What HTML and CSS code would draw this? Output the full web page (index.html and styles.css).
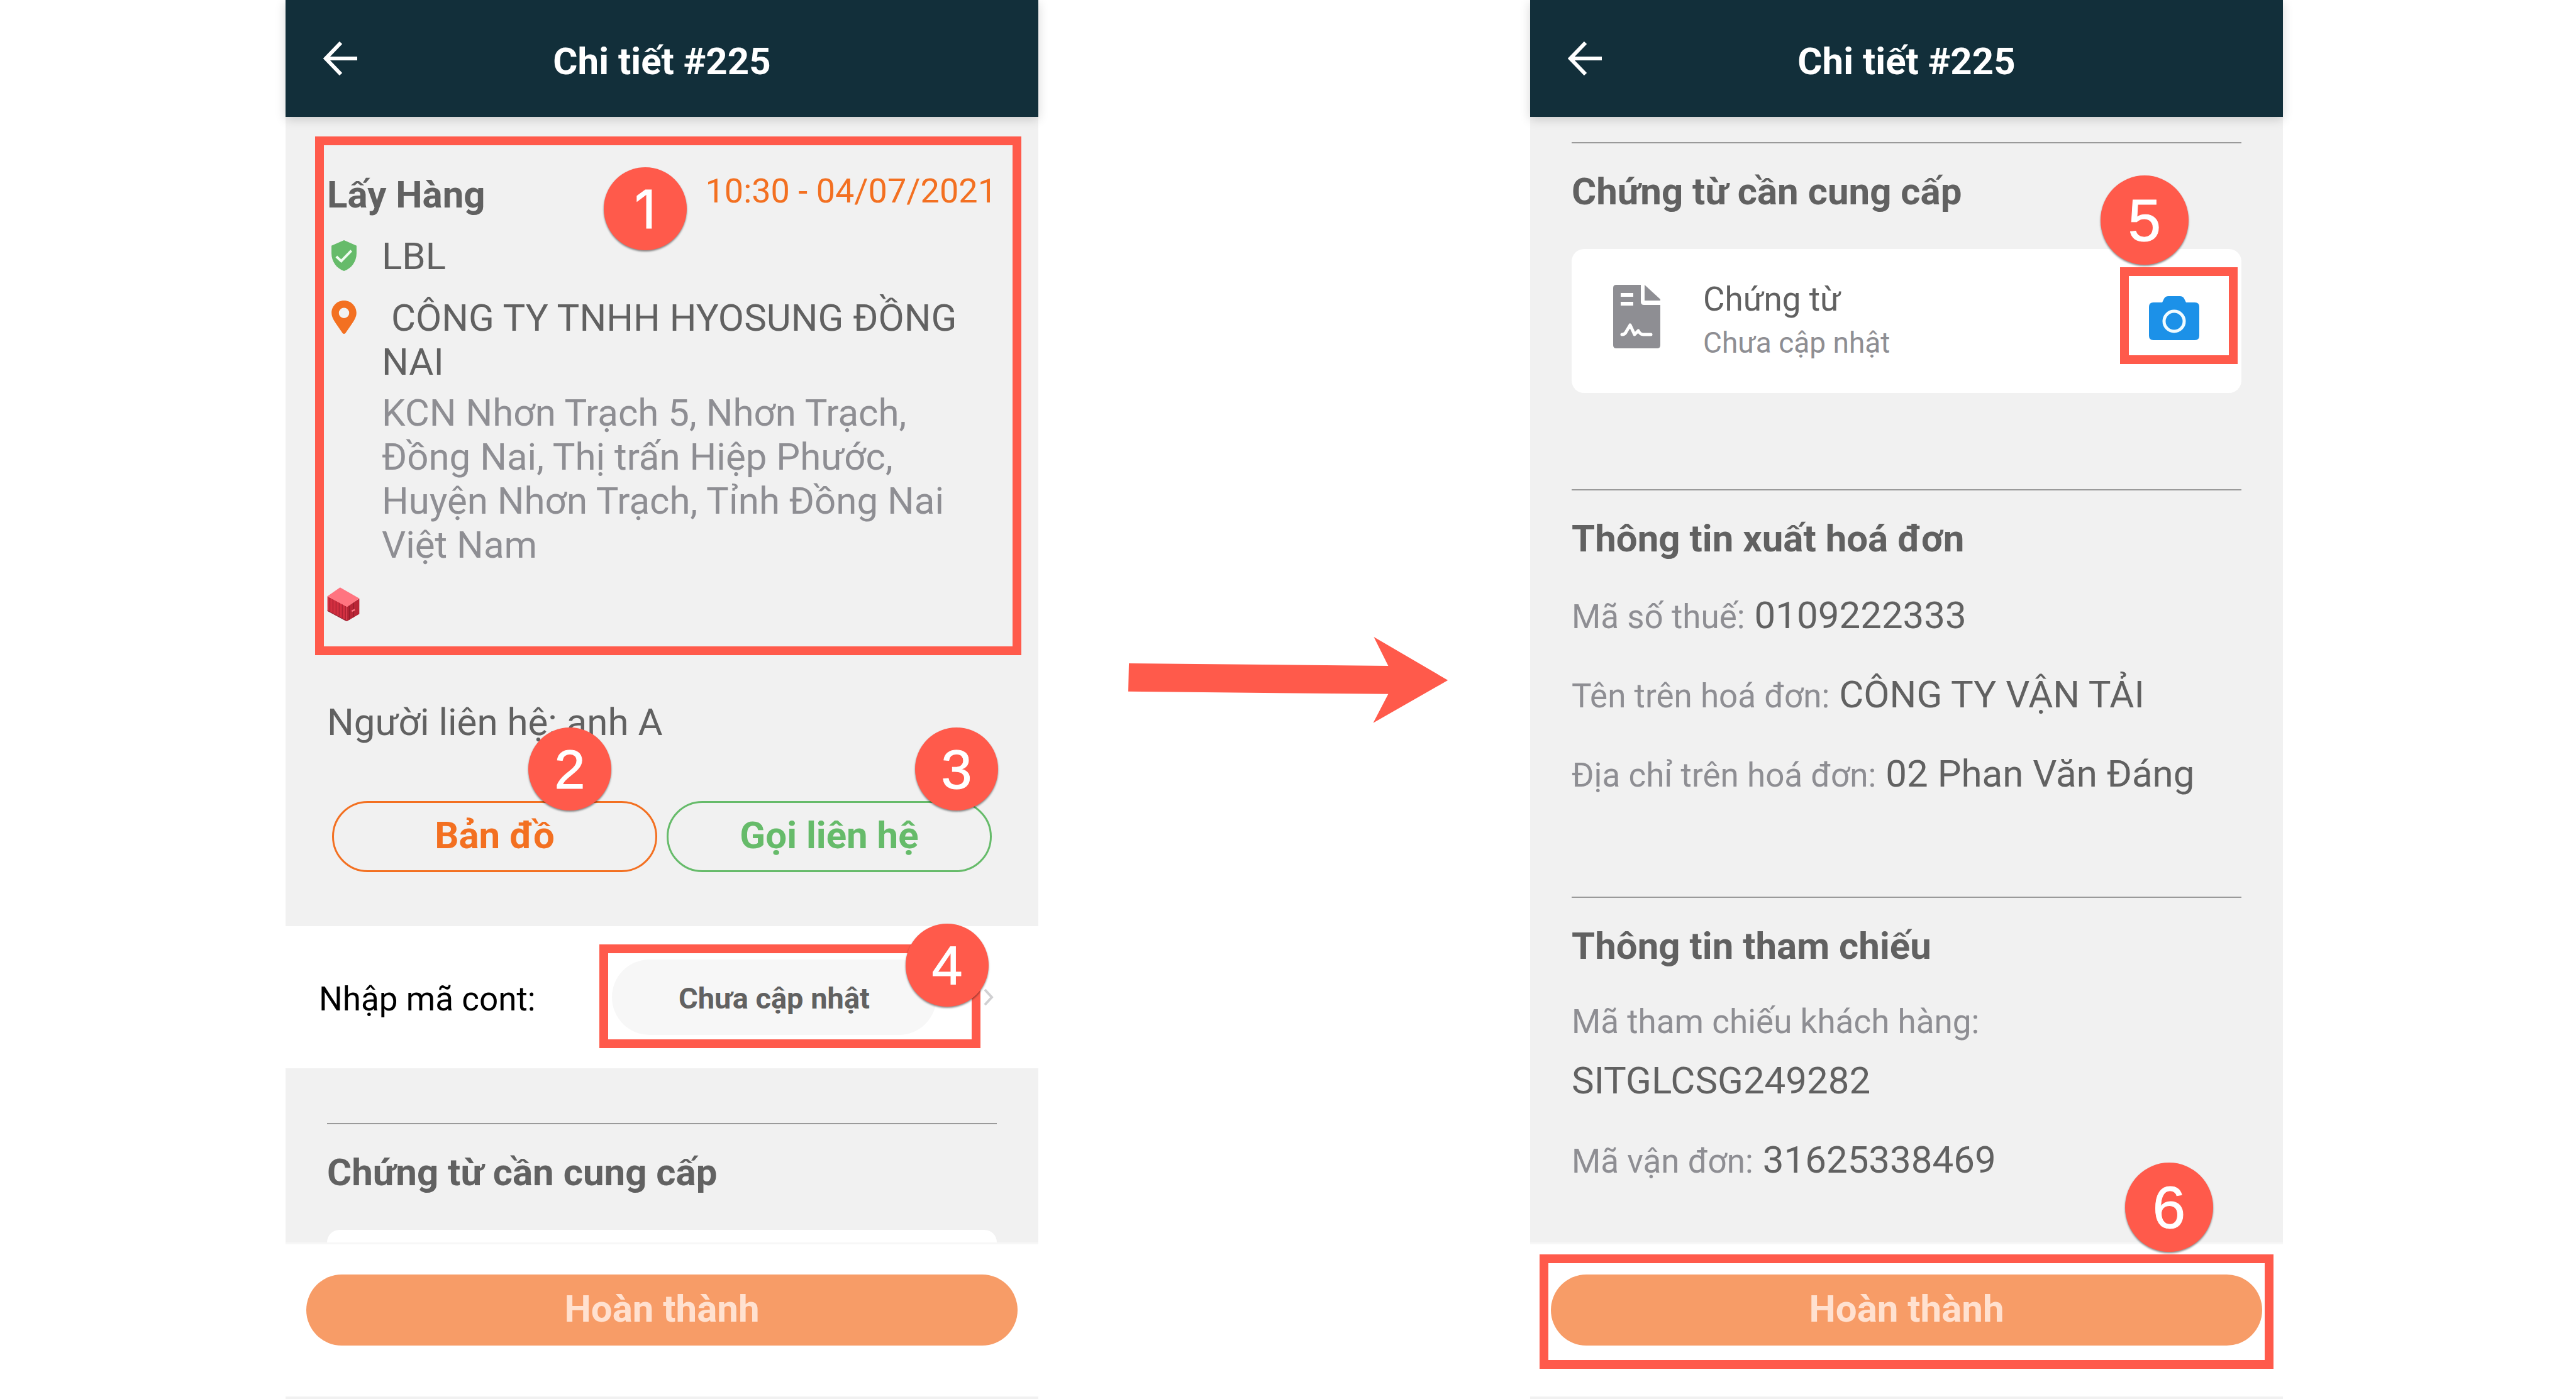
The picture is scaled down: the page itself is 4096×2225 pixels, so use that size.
FILE: index.html
```html
<!DOCTYPE html>
<html lang="vi">
<head>
<meta charset="utf-8">
<meta name="viewport" content="width=device-width, initial-scale=1">
<title>Chi tiết #225</title>
<link rel="stylesheet" href="styles.css">
</head>
<body>
<main class="guide">
  <section class="phone phone-first">
    <header class="topbar">
      <button class="back" type="button" aria-label="Quay lại">
        <svg viewBox="0 0 54 54" aria-hidden="true"><path d="M54 27H5M28 2 4 27l24 25" fill="none" stroke="#fff" stroke-width="6"/></svg>
      </button>
      <h1 class="topbar-title">Chi tiết #225</h1>
    </header>
    <div class="content">
      <section class="stop">
        <div class="stop-info">
          <div class="stop-head">
            <h2 class="heading">Lấy Hàng</h2>
            <time class="stop-time">10:30 - 04/07/2021</time>
          </div>
          <div class="stop-row">
            <span class="stop-icon"><svg class="icon-shield" viewBox="102 55 144 177" aria-hidden="true"><path d="M174 55l72 32v44c0 46-30 88-72 101-42-13-72-55-72-101V87z" fill="#66bb6a"/><path d="M130 149l28 26 58-60" fill="none" stroke="#effcf0" stroke-width="14"/></svg></span>
            <p class="value">LBL</p>
          </div>
          <div class="stop-row">
            <span class="stop-icon"><svg class="icon-pin" viewBox="102 401 144 193" aria-hidden="true"><path fill-rule="evenodd" d="M174 401c-40 0-72 32-72 72 0 22 12 42 25 61l39 56q8 8 16 0l39-56c13-19 25-39 25-61 0-40-32-72-72-72zm0 42a30 30 0 1 1 0 60 30 30 0 0 1 0-60z" fill="#f37021"/></svg></span>
            <div class="stop-place">
              <p class="value">&nbsp;CÔNG TY TNHH HYOSUNG ĐỒNG NAI</p>
              <p class="address">KCN Nhơn Trạch 5, Nhơn Trạch, Đồng Nai, Thị trấn Hiệp Phước, Huyện Nhơn Trạch, Tỉnh Đồng Nai Việt Nam</p>
            </div>
          </div>
          <svg class="icon-container" viewBox="80 68 188 196" aria-hidden="true">
            <path d="M82 120l113 60v84L82 203z" fill="#d32f40"/>
            <path d="M195 180l71-47v89l-71 42z" fill="#b92536"/>
            <path d="M155 69l111 63-71 49-113-61z" fill="#ff7480"/>
            <path d="M96 130v80M114 139v80M132 149v80M150 158v80M168 168v80M186 177v80" stroke="#ad2334" stroke-width="5"/>
            <path d="M82 203l113 61" stroke="#8d2030" stroke-width="4"/>
            <path d="M232 158v84M208 174v82" stroke="#921d2b" stroke-width="5"/>
            <path d="M222 206l18-9" stroke="#ff7480" stroke-width="9"/>
          </svg>
          <span class="mark mark-stop"></span>
          <span class="badge badge-1">1</span>
        </div>
        <p class="value contact">Người liên hệ: anh A</p>
        <div class="actions">
          <div class="action">
            <button class="outline outline-orange" type="button">Bản đồ</button>
            <span class="badge badge-2">2</span>
          </div>
          <div class="action">
            <button class="outline outline-green" type="button">Gọi liên hệ</button>
            <span class="badge badge-3">3</span>
          </div>
        </div>
      </section>
      <section class="cont-row">
        <label class="cont-label" for="cont-code">Nhập mã cont:</label>
        <div class="cont-field">
          <button class="pill" id="cont-code" type="button">Chưa cập nhật</button>
          <span class="mark mark-cont"></span>
          <span class="badge badge-4">4</span>
        </div>
        <svg class="chevron" viewBox="0 0 16 28" aria-hidden="true"><path d="M2 2l11 12L2 26" fill="none" stroke="#d0d0d2" stroke-width="4"/></svg>
      </section>
      <section class="block">
        <h2 class="heading">Chứng từ cần cung cấp</h2>
        <div class="card"></div>
      </section>
    </div>
    <footer class="bottom">
      <div class="finish"><button class="primary" type="button">Hoàn thành</button></div>
    </footer>
  </section>

  <svg class="arrow" viewBox="0 0 509 137" role="img" aria-label="Tiếp theo"><path d="M1 42l413 4-23-46 118 69-119 68 24-46L0 87z" fill="#ff5a4b"/></svg>

  <section class="phone phone-second">
    <header class="topbar">
      <button class="back" type="button" aria-label="Quay lại">
        <svg viewBox="0 0 54 54" aria-hidden="true"><path d="M54 27H5M28 2 4 27l24 25" fill="none" stroke="#fff" stroke-width="6"/></svg>
      </button>
      <h1 class="topbar-title">Chi tiết #225</h1>
    </header>
    <div class="content content-scrolled">
      <section class="block">
        <h2 class="heading">Chứng từ cần cung cấp</h2>
        <div class="card">
          <svg class="icon-doc" viewBox="0 0 75 101" aria-hidden="true">
            <path d="M5 0h39v27q0 5 5 5h26v64q0 5-5 5H5q-5 0-5-5V5q0-5 5-5z" fill="#8e8e93"/>
            <path d="M50 0l25 23v2H50z" fill="#8e8e93"/>
            <path d="M12 16h20M12 30h20" stroke="#fff" stroke-width="6"/>
            <path d="M14 79q5 0 7-5l6-10 7 15 6-6q3 6 8 6h12" fill="none" stroke="#fff" stroke-width="5" stroke-linecap="round" stroke-linejoin="round"/>
          </svg>
          <div class="card-text">
            <p class="card-title">Chứng từ</p>
            <p class="card-note">Chưa cập nhật</p>
          </div>
          <div class="camera-wrap">
            <button class="camera" type="button" aria-label="Chụp ảnh">
              <svg viewBox="0 0 80 70" aria-hidden="true"><path d="M21 10l3-6q2-4 7-4h18q5 0 7 4l3 6h14q7 0 7 7v46q0 7-7 7H7q-7 0-7-7V17q0-7 7-7z" fill="#1c91e8"/><circle cx="40" cy="40" r="16" fill="none" stroke="#f0fbff" stroke-width="5"/></svg>
            </button>
            <span class="mark mark-camera"></span>
            <span class="badge badge-large badge-5">5</span>
          </div>
        </div>
      </section>
      <section class="block block-invoice">
        <h2 class="heading">Thông tin xuất hoá đơn</h2>
        <div class="facts">
          <p class="value"><span class="label">Mã số thuế:</span> 0109222333</p>
          <p class="value"><span class="label">Tên trên hoá đơn:</span> CÔNG TY VẬN TẢI</p>
          <p class="value"><span class="label">Địa chỉ trên hoá đơn:</span> 02 Phan Văn Đáng</p>
        </div>
      </section>
      <section class="block block-reference">
        <h2 class="heading">Thông tin tham chiếu</h2>
        <div class="facts">
          <div class="fact-stacked">
            <p class="label label-line">Mã tham chiếu khách hàng:</p>
            <p class="value">SITGLCSG249282</p>
          </div>
          <p class="value"><span class="label">Mã vận đơn:</span> 31625338469</p>
        </div>
      </section>
    </div>
    <footer class="bottom">
      <div class="finish">
        <button class="primary" type="button">Hoàn thành</button>
        <span class="mark mark-finish"></span>
        <span class="badge badge-large badge-6">6</span>
      </div>
    </footer>
  </section>
</main>
</body>
</html>
```
FILE: styles.css
```css
* {
  box-sizing: border-box;
}

body,
h1,
h2,
p {
  margin: 0;
}

body {
  background: #fff;
  color: #616161;
  font-family: Roboto, "Noto Sans", sans-serif;
  font-size: 60px;
  line-height: 70px;
}

button {
  margin: 0;
  padding: 0;
  border: 0;
  background: none;
  color: inherit;
  font: inherit;
  cursor: pointer;
}

svg {
  display: block;
}

.guide {
  display: grid;
  grid-template-columns: 454fr 1197fr 782fr 1197fr 466fr;
  height: 100vh;
}

.phone {
  display: flex;
  flex-direction: column;
  min-width: 0;
  height: 100vh;
  background: #f1f1f1;
}

.phone-first {
  grid-column: 2;
}

.phone-second {
  grid-column: 4;
}

.arrow {
  grid-column: 3;
  align-self: start;
  justify-self: center;
  width: 65%;
  margin-top: 1013px;
  margin-left: 12px;
}

/* Top bar */
.topbar {
  position: relative;
  z-index: 1;
  display: grid;
  grid-template-columns: 54px 1fr 54px;
  align-items: center;
  flex: none;
  height: 186px;
  padding: 0 60px;
  background: #122f3a;
  box-shadow: 0 4px 16px rgba(0, 0, 0, 0.16);
  color: #fff;
}

.back svg {
  width: 54px;
  height: 54px;
}

.topbar-title {
  padding-top: 10px;
  font-size: 60px;
  font-weight: 700;
  text-align: center;
}

/* Scrolling area */
.content {
  flex: 1;
  min-height: 0;
  overflow: hidden;
}

.content-scrolled {
  padding-top: 40px;
}

.heading {
  font-size: 60px;
  font-weight: 700;
}

.label {
  color: #8e8e93;
  font-size: 53px;
  line-height: 60px;
}

.label-line {
  line-height: 66px;
}

.stop {
  padding: 89px 66px 86px;
}

.stop-info {
  position: relative;
}

.stop-head {
  display: flex;
  justify-content: space-between;
  align-items: flex-start;
}

.stop-time {
  color: #f37021;
  font-size: 54px;
  line-height: 58px;
}

.stop-row {
  display: flex;
  margin-top: 28px;
}

.stop-icon {
  display: flex;
  align-items: center;
  flex: none;
  width: 87px;
  height: 66px;
  padding-left: 7px;
}

.icon-shield {
  width: 40px;
  height: 49px;
}

.icon-pin {
  width: 40px;
  height: 53px;
}

.address {
  margin-top: 11px;
  color: #8e8e93;
}

.icon-container {
  width: 52px;
  height: 54px;
  margin-top: 32px;
}

.contact {
  margin-top: 126px;
}

.actions {
  display: grid;
  grid-template-columns: 1fr 1fr;
  gap: 15px;
  margin-top: 90px;
  padding: 0 8px;
}

.action {
  position: relative;
}

.outline {
  display: block;
  width: 100%;
  height: 113px;
  padding-bottom: 4px;
  border: 3px solid;
  border-radius: 57px;
  font-weight: 700;
}

.outline-orange {
  color: #f37021;
}

.outline-green {
  color: #66bb6a;
}

/* Container number row */
.cont-row {
  display: flex;
  align-items: center;
  height: 226px;
  padding: 0 71px 0 53px;
  background: #fff;
}

.cont-label {
  padding-top: 6px;
  color: #000;
  font-size: 53px;
}

.cont-field {
  position: relative;
  width: 516px;
  margin-right: 75px;
  margin-left: auto;
}

.pill {
  display: block;
  width: 100%;
  height: 120px;
  padding-top: 4px;
  border-radius: 60px;
  background: #f7f7f7;
  font-size: 47px;
  font-weight: 700;
}

.chevron {
  width: 16px;
  height: 28px;
}

/* Sections under a rule */
.block {
  margin: 0 66px;
  padding-top: 42px;
  border-top: 2px solid #9a9a9a;
}

.cont-row + .block {
  margin-top: 87px;
}

.block-invoice {
  margin-top: 153px;
}

.block-reference {
  margin-top: 160px;
}

.card {
  display: flex;
  align-items: center;
  height: 229px;
  margin-top: 56px;
  padding: 0 66px;
  border-radius: 20px;
  background: #fff;
}

.icon-doc {
  width: 75px;
  height: 101px;
  margin-bottom: 14px;
}

.card-text {
  margin-bottom: 2px;
  margin-left: 68px;
}

.card-title {
  font-size: 53px;
}

.card-note {
  color: #8e8e93;
  font-size: 46px;
  line-height: 68px;
}

.camera-wrap {
  position: relative;
  margin-right: 1px;
  margin-bottom: 10px;
  margin-left: auto;
}

.camera {
  display: block;
}

.camera svg {
  width: 80px;
  height: 70px;
}

.facts {
  display: flex;
  flex-direction: column;
  gap: 56px;
  margin-top: 52px;
}

.fact-stacked {
  display: flex;
  flex-direction: column;
  gap: 26px;
}

/* Bottom bar */
.bottom {
  flex: none;
  padding: 48px 33px 81px;
  border-top: 3px solid #f7f7f7;
  border-bottom: 4px solid #f1f1f1;
  background: #fff;
}

.finish {
  position: relative;
}

.primary {
  display: block;
  width: 100%;
  height: 113px;
  padding-bottom: 4px;
  border-radius: 57px;
  background: #f79c67;
  color: #ffe1d0;
  font-weight: 700;
}

/* Numbered callouts */
.mark {
  position: absolute;
  border: 14px solid #ff5a4b;
  pointer-events: none;
}

.badge {
  position: absolute;
  z-index: 2;
  width: 132px;
  height: 132px;
  border-radius: 50%;
  background: #ff5a4b;
  box-shadow: 0 2px 3px rgba(0, 0, 0, 0.45);
  color: #fff;
  font-family: "Liberation Sans", Arial, sans-serif;
  font-size: 88px;
  line-height: 134px;
  text-align: center;
  -webkit-text-stroke: 1px #fff;
}

.badge-large {
  width: 140px;
  height: 142px;
  font-size: 94px;
  line-height: 144px;
}

.mark-stop {
  top: -58px;
  right: -39px;
  bottom: -54px;
  left: -19px;
}

.badge-1 {
  top: -9px;
  left: 440px;
  font-family: Inter, "Liberation Sans", sans-serif;
  font-size: 84px;
}

.badge-2,
.badge-3 {
  top: -117px;
}

.badge-2 {
  left: 312px;
}

.badge-3 {
  left: 395px;
}

.mark-cont {
  top: -24px;
  left: -20px;
  width: 606px;
  height: 165px;
}

.badge-4 {
  top: -57px;
  left: 467px;
}

.mark-camera {
  top: -46px;
  left: -46px;
  width: 187px;
  height: 154px;
}

.badge-5 {
  top: -192px;
  left: -77px;
}

.mark-finish {
  top: -32px;
  right: -18px;
  left: -18px;
  height: 182px;
}

.badge-6 {
  top: -178px;
  right: 78px;
}
```
